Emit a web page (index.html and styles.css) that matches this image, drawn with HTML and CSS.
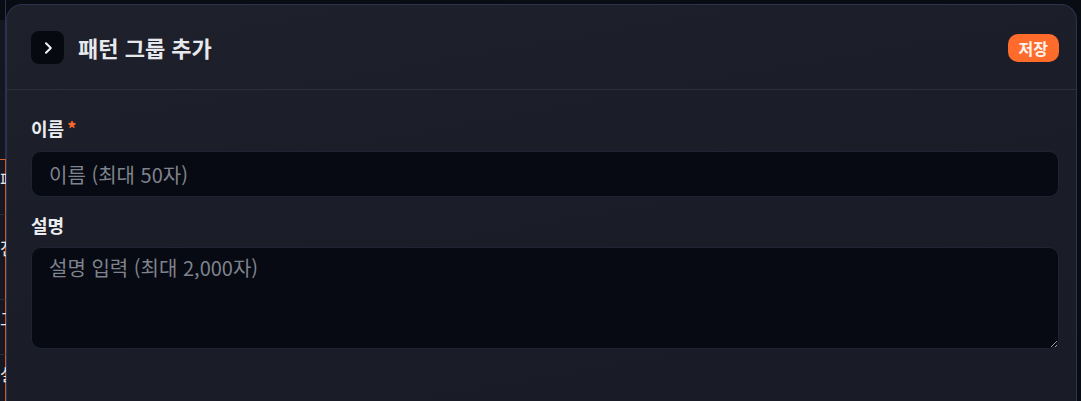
FILE: index.html
```html
<!DOCTYPE html>
<html lang="ko">

<head>
    <meta charset="UTF-8">
    <meta name="viewport" content="width=device-width, initial-scale=1.0">
    <title>패턴 그룹 추가</title>
    <link rel="stylesheet" href="styles.css">
</head>

<body>
<div class="page">
    <div class="behind">
        <div class="behind-top"></div>
        <div class="behind-row active">패턴</div>
        <div class="behind-row tall">전체</div>
        <div class="behind-row">그룹</div>
        <div class="behind-row">설정</div>
    </div>

    <div class="panel">
        <div class="panel-head">
            <button class="icon-btn" type="button">
                <svg width="14" height="14" viewBox="0 0 14 14">
                    <path d="M5 2.2 L9.8 7 L5 11.8" fill="none" stroke="#f2f3f5" stroke-width="2" stroke-linecap="round" stroke-linejoin="round"/>
                </svg>
            </button>
            <h2 class="title">패턴 그룹 추가</h2>
            <button class="save-btn" type="button">저장</button>
        </div>

        <form class="panel-body">
            <label class="lbl" for="input_name">이름<span class="req">*</span></label>
            <input id="input_name" class="ipt" type="text" placeholder="이름 (최대 50자)">

            <label class="lbl lbl2" for="input_desc">설명</label>
            <textarea id="input_desc" class="txt" placeholder="설명 입력 (최대 2,000자)"></textarea>
        </form>
    </div>
</div>
</body>

</html>
```

FILE: styles.css
```css
html,
body {
    margin: 0;
    height: 100%;
    background-color: #0a0c13;
    overflow: hidden;
}

body {
    font-family: "Noto Sans CJK KR", "Noto Sans", sans-serif;
    color: #e7e8ec;
}

.page {
    display: flex;
    height: 100%;
}

/* the page that lies under the drawer, only a sliver shows */
.behind {
    width: 6px;
    flex-shrink: 0;
    overflow: hidden;
    display: flex;
    flex-direction: column;
}

.behind-top {
    height: 159px;
    background: linear-gradient(#0a0c13 20px, #141722 20px);
    border-right: 1px solid #2c3150;
    box-sizing: border-box;
    flex-shrink: 0;
}

.behind-row {
    height: 55px;
    flex-shrink: 0;
    padding-top: 8px;
    display: flex;
    align-items: flex-start;
    justify-content: flex-end;
    font-size: 17px;
    line-height: 22px;
    white-space: nowrap;
    color: #e4e5ea;
    background-color: #151823;
    border-top: 1px solid #2a2e3c;
    border-right: 1px solid #c75e2e;
    box-sizing: border-box;
    direction: rtl;
}

.behind-row.tall {
    height: 85px;
    padding-top: 22px;
}

.behind-row.active {
    border-top-color: #d4622c;
}

.panel {
    flex: 1;
    margin: 4px 4px 0 0;
    border: 1px solid #2d3250;
    border-bottom: none;
    border-radius: 16px 16px 0 0;
    background: linear-gradient(170deg, #1e212c 0%, #1b1e29 40%, #191c26 100%);
    display: flex;
    flex-direction: column;
}

.panel-head {
    display: flex;
    align-items: center;
    padding: 0 17px 0 24px;
    border-bottom: 1px solid #2b2f3e;
    box-sizing: border-box;
    height: 85px;
}

.icon-btn {
    width: 33px;
    height: 33px;
    border: none;
    border-radius: 8px;
    background-color: #070910;
    display: flex;
    align-items: center;
    justify-content: center;
    padding: 0;
    margin-top: 1px;
}

.title {
    margin: 0 0 0 14px;
    font-size: 22px;
    font-weight: 700;
    line-height: 30px;
    color: #e8e9ed;
    flex: 1;
}

.save-btn {
    height: 28px;
    padding: 0 11px;
    border: none;
    border-radius: 10px;
    background-color: #ff6b2b;
    color: #fff4ee;
    font-family: "Noto Sans CJK KR", sans-serif;
    font-size: 16px;
    font-weight: 700;
    line-height: 28px;
    margin-top: 1px;
}

.panel-body {
    display: flex;
    flex-direction: column;
    padding: 26px 17px 0 24px;
}

.lbl {
    font-size: 18px;
    font-weight: 700;
    line-height: 24px;
    margin-bottom: 11px;
    color: #ecedf0;
}

.lbl2 {
    margin-top: 16px;
    margin-bottom: 10px;
}

.req {
    color: #ff6b2b;
    margin-left: 3px;
}

.ipt,
.txt {
    box-sizing: border-box;
    width: 100%;
    border: 1px solid #1f2335;
    border-radius: 10px;
    background-color: #070a12;
    color: #e7e8ec;
    font-family: "Noto Sans CJK KR", sans-serif;
    font-size: 20px;
    padding: 0 17px;
    outline: none;
    color-scheme: dark;
}

.ipt {
    height: 46px;
}

.txt {
    height: 102px;
    padding-top: 6px;
    resize: vertical;
    line-height: 28px;
}

.ipt::placeholder,
.txt::placeholder {
    color: #7f838d;
}
```
